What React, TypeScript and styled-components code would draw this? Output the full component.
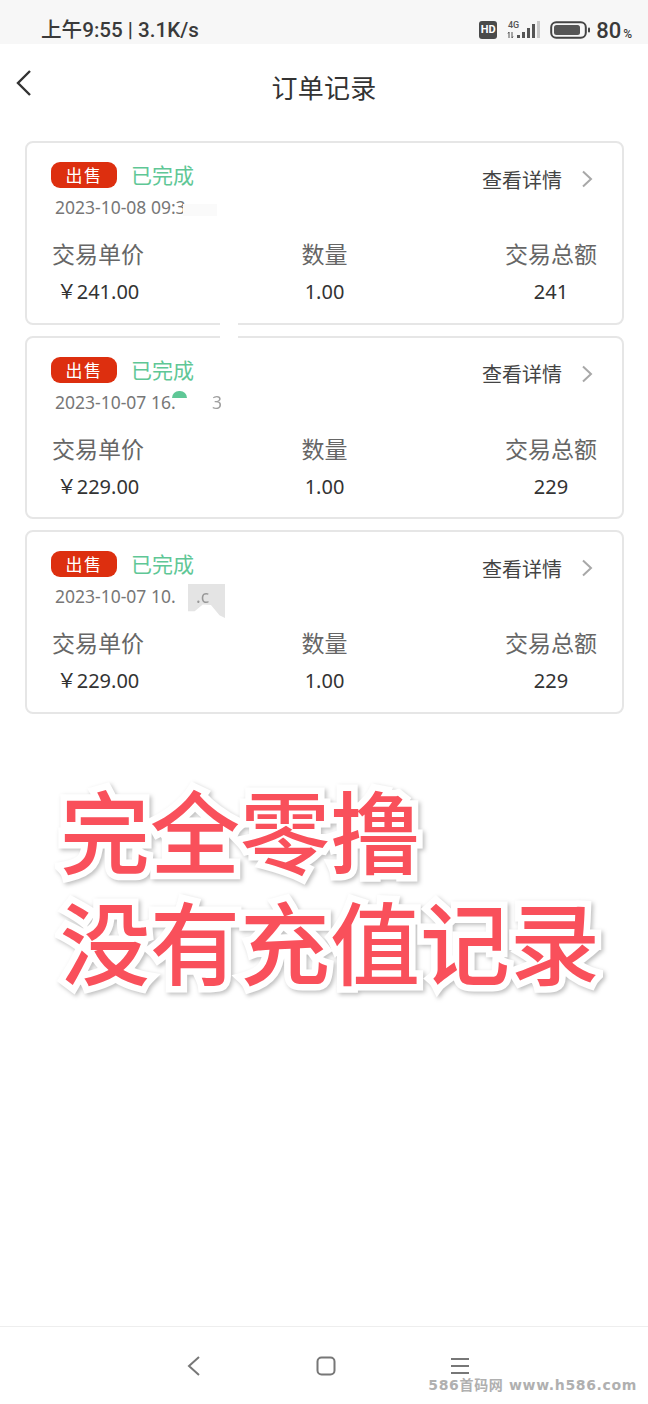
import React from 'react';
import styled, { createGlobalStyle } from 'styled-components';

const CJK = '"Noto Sans CJK SC", "Noto Sans", sans-serif';

const GlobalStyle = createGlobalStyle`
  html, body {
    margin: 0;
    padding: 0;
    background: #fff;
  }
  body {
    font-family: ${CJK};
  }
`;

type Order = {
  date: string;
  tail?: string;
  price: string;
  total: string;
  smudge: 'first' | 'second' | 'third';
};

const orders: Order[] = [
  { date: '2023-10-08 09:3', price: '241.00', total: '241', smudge: 'first' },
  { date: '2023-10-07 16.', tail: '3', price: '229.00', total: '229', smudge: 'second' },
  { date: '2023-10-07 10.', price: '229.00', total: '229', smudge: 'third', tail: '.c' },
];

const App: React.FC = () => {
  return (
    <Page>
      <GlobalStyle />
      <StatusBar>
        <StatusText>上午9:55 | 3.1K/s</StatusText>
        <StatusIcons>
          <HdBadge>HD</HdBadge>
          <svg width="34" height="20" viewBox="0 0 34 20">
            <text x="1" y="8" fontSize="9" fontWeight="500" fill="#555" fontFamily="Roboto, sans-serif">4G</text>
            <path d="M2 12v6M1 13.5l1-1.5M5 12v6M6 16.5l-1 1.5" stroke="#555" strokeWidth="1" fill="none" />
            <rect x="10" y="15" width="3" height="3" fill="#555" />
            <rect x="15" y="12" width="3" height="6" fill="#555" />
            <rect x="20" y="8" width="3" height="10" fill="#555" />
            <rect x="25" y="4" width="3" height="14" fill="#555" />
            <rect x="30" y="1" width="3" height="17" fill="#c9c9c9" />
          </svg>
          <svg width="41" height="20" viewBox="0 0 41 20">
            <rect x="1.2" y="2.2" width="34.6" height="15.6" rx="5" fill="none" stroke="#444" strokeWidth="2" />
            <rect x="4" y="5" width="26" height="10" rx="2.5" fill="#555" />
            <rect x="38" y="7.5" width="2" height="5" rx="1" fill="#444" />
          </svg>
          <BatteryText>
            80<small>%</small>
          </BatteryText>
        </StatusIcons>
      </StatusBar>

      <Header>
        <BackButton>
          <svg width="18" height="28" viewBox="0 0 18 28">
            <path d="M15 2 3 14l12 12" fill="none" stroke="#333" strokeWidth="2.4" />
          </svg>
        </BackButton>
        <Title>订单记录</Title>
      </Header>

      <CardList>
        {orders.map((order) => (
          <Card key={order.date}>
            <CardTop>
              <div>
                <BadgeRow>
                  <SellBadge>出售</SellBadge>
                  <Status>已完成</Status>
                </BadgeRow>
                <DateText>
                  {order.date}
                  <Smudge $kind={order.smudge} />
                  {order.tail && <DateTail $kind={order.smudge}>{order.tail}</DateTail>}
                </DateText>
              </div>
              <DetailLink>
                查看详情
                <svg width="12" height="18" viewBox="0 0 12 18">
                  <path d="M2 1.5 10 9l-8 7.5" fill="none" stroke="#a8a8a8" strokeWidth="2" />
                </svg>
              </DetailLink>
            </CardTop>
            <StatsRow>
              <StatColumn>
                <StatLabel>交易单价</StatLabel>
                <StatValue>￥{order.price}</StatValue>
              </StatColumn>
              <StatColumn>
                <StatLabel>数量</StatLabel>
                <StatValue>1.00</StatValue>
              </StatColumn>
              <StatColumn>
                <StatLabel>交易总额</StatLabel>
                <StatValue>{order.total}</StatValue>
              </StatColumn>
            </StatsRow>
          </Card>
        ))}
        <BorderPatch />
      </CardList>

      <Slogan>
        <div>完全零撸</div>
        <div>没有充值记录</div>
      </Slogan>

      <NavBar>
        <svg width="16" height="22" viewBox="0 0 16 22">
          <path d="M13 2 3 11l10 9" fill="none" stroke="#777" strokeWidth="2" />
        </svg>
        <svg width="20" height="20" viewBox="0 0 20 20">
          <rect x="1.5" y="1.5" width="17" height="17" rx="4" fill="none" stroke="#777" strokeWidth="2" />
        </svg>
        <svg width="20" height="18" viewBox="0 0 20 18">
          <path d="M1 2h18M1 9h18M1 16h18" fill="none" stroke="#777" strokeWidth="1.8" />
        </svg>
        <Watermark>586首码网 www.h586.com</Watermark>
      </NavBar>
    </Page>
  );
};

const Page = styled.div`
  position: relative;
  display: flex;
  flex-direction: column;
  width: 648px;
  height: 1404px;
  overflow: hidden;
  background: #fff;
`;

const StatusBar = styled.div`
  display: flex;
  align-items: flex-end;
  justify-content: space-between;
  box-sizing: border-box;
  height: 44px;
  padding: 0 16px 0 41px;
  background: #f7f7f7;
`;

const StatusText = styled.span`
  font-family: Roboto, ${CJK};
  font-size: 20.6px;
  font-weight: 500;
  line-height: 28px;
  color: #3a3a3a;
`;

const StatusIcons = styled.div`
  display: flex;
  align-items: center;
  gap: 9px;
  height: 28px;
`;

const HdBadge = styled.span`
  width: 18px;
  height: 18px;
  margin-right: 1px;
  border-radius: 3px;
  background: #4a4a4a;
  color: #fff;
  font-family: Roboto, sans-serif;
  font-size: 11px;
  font-weight: 700;
  line-height: 18px;
  text-align: center;
`;

const BatteryText = styled.span`
  margin-left: -4px;
  font-family: Roboto, sans-serif;
  font-size: 22px;
  font-weight: 500;
  color: #3a3a3a;

  small {
    margin-left: 2px;
    font-size: 12px;
  }
`;

const Header = styled.div`
  position: relative;
  display: flex;
  align-items: flex-start;
  justify-content: center;
  height: 97px;
`;

const BackButton = styled.div`
  position: absolute;
  left: 15px;
  top: 25px;
  line-height: 0;
`;

const Title = styled.h1`
  margin: 24px 0 0;
  font-size: 26px;
  font-weight: 400;
  line-height: 38px;
  letter-spacing: 0.3px;
  color: #333;
`;

const CardList = styled.div`
  position: relative;
  display: flex;
  flex-direction: column;
  gap: 11px;
  padding: 0 24px 0 25px;
`;

const BorderPatch = styled.div`
  position: absolute;
  left: 220px;
  top: 181px;
  width: 18px;
  height: 23px;
  background: #fff;
`;

const Card = styled.div`
  box-sizing: border-box;
  height: 183.5px;
  padding: 18px 26px 0 24px;
  border: 2px solid #e6e6e6;
  border-radius: 8px;
  background: #fff;
`;

const CardTop = styled.div`
  display: flex;
  justify-content: space-between;
  align-items: flex-start;
`;

const BadgeRow = styled.div`
  display: flex;
  align-items: center;
  gap: 14px;
  height: 28px;
`;

const SellBadge = styled.span`
  width: 66px;
  height: 26px;
  border-radius: 9px;
  background: #dd2f0f;
  color: #fff;
  font-size: 17px;
  line-height: 26px;
  text-align: center;
  letter-spacing: 1.5px;
`;

const Status = styled.span`
  margin-top: -2px;
  font-size: 21px;
  line-height: 28px;
  color: #5fc796;
`;

const DateText = styled.div`
  position: relative;
  margin: 6px 0 0 4px;
  font-family: "Noto Sans", ${CJK};
  font-size: 17.5px;
  line-height: 24px;
  color: #777;
`;

const DateTail = styled.span<{ $kind: Order['smudge'] }>`
  position: absolute;
  top: 0;
  left: ${({ $kind }) => ($kind === 'second' ? '157px' : '141px')};
  opacity: 0.7;
`;

const Smudge = styled.span<{ $kind: Order['smudge'] }>`
  position: absolute;
  ${({ $kind }) =>
    $kind === 'first'
      ? 'left: 128px; top: 9px; width: 34px; height: 12px; background: #fafafa;'
      : $kind === 'second'
        ? 'left: 117px; top: 1px; width: 15px; height: 7px; border-radius: 8px 8px 0 0; background: #5fc796;'
        : 'left: 133px; top: 0; width: 37px; height: 34px; background: #e4e4e4; clip-path: polygon(0 0, 100% 0, 100% 100%, 85% 92%, 62% 62%, 40% 60%, 18% 80%, 0 80%);'}
`;

const DetailLink = styled.div`
  display: flex;
  align-items: center;
  gap: 19px;
  height: 36px;
  margin: 0 3px 0 0;
  font-size: 20px;
  color: #444;
`;

const StatsRow = styled.div`
  display: flex;
  justify-content: space-between;
  margin: 17px -1px 0 1px;
`;

const StatColumn = styled.div`
  display: flex;
  flex-direction: column;
  align-items: center;
  gap: 5px;
`;

const StatLabel = styled.span`
  font-size: 23px;
  line-height: 34px;
  color: #666;
`;

const StatValue = styled.span`
  font-family: "Noto Sans", ${CJK};
  font-size: 20px;
  line-height: 34px;
  color: #333;
`;

const Slogan = styled.div`
  margin: 59px 0 0 60px;
  font-size: 90px;
  font-weight: 500;
  line-height: 111px;
  white-space: nowrap;
  color: #f9505b;
  -webkit-text-stroke: 13px #fff;
  paint-order: stroke fill;
  filter: drop-shadow(2px 2px 2px rgba(0, 0, 0, 0.25));
`;

const NavBar = styled.div`
  position: absolute;
  left: 0;
  right: 0;
  bottom: 0;
  display: flex;
  align-items: center;
  justify-content: center;
  gap: 114px;
  height: 78px;
  padding: 0 0 0 8px;
  box-sizing: border-box;
  border-top: 1px solid #eee;
`;

const Watermark = styled.span`
  position: absolute;
  right: 11px;
  bottom: 10px;
  font-family: "DejaVu Sans", ${CJK};
  font-size: 14px;
  font-weight: 700;
  letter-spacing: 0.65px;
  white-space: nowrap;
  color: #b0b0b0;
`;

export default App;
